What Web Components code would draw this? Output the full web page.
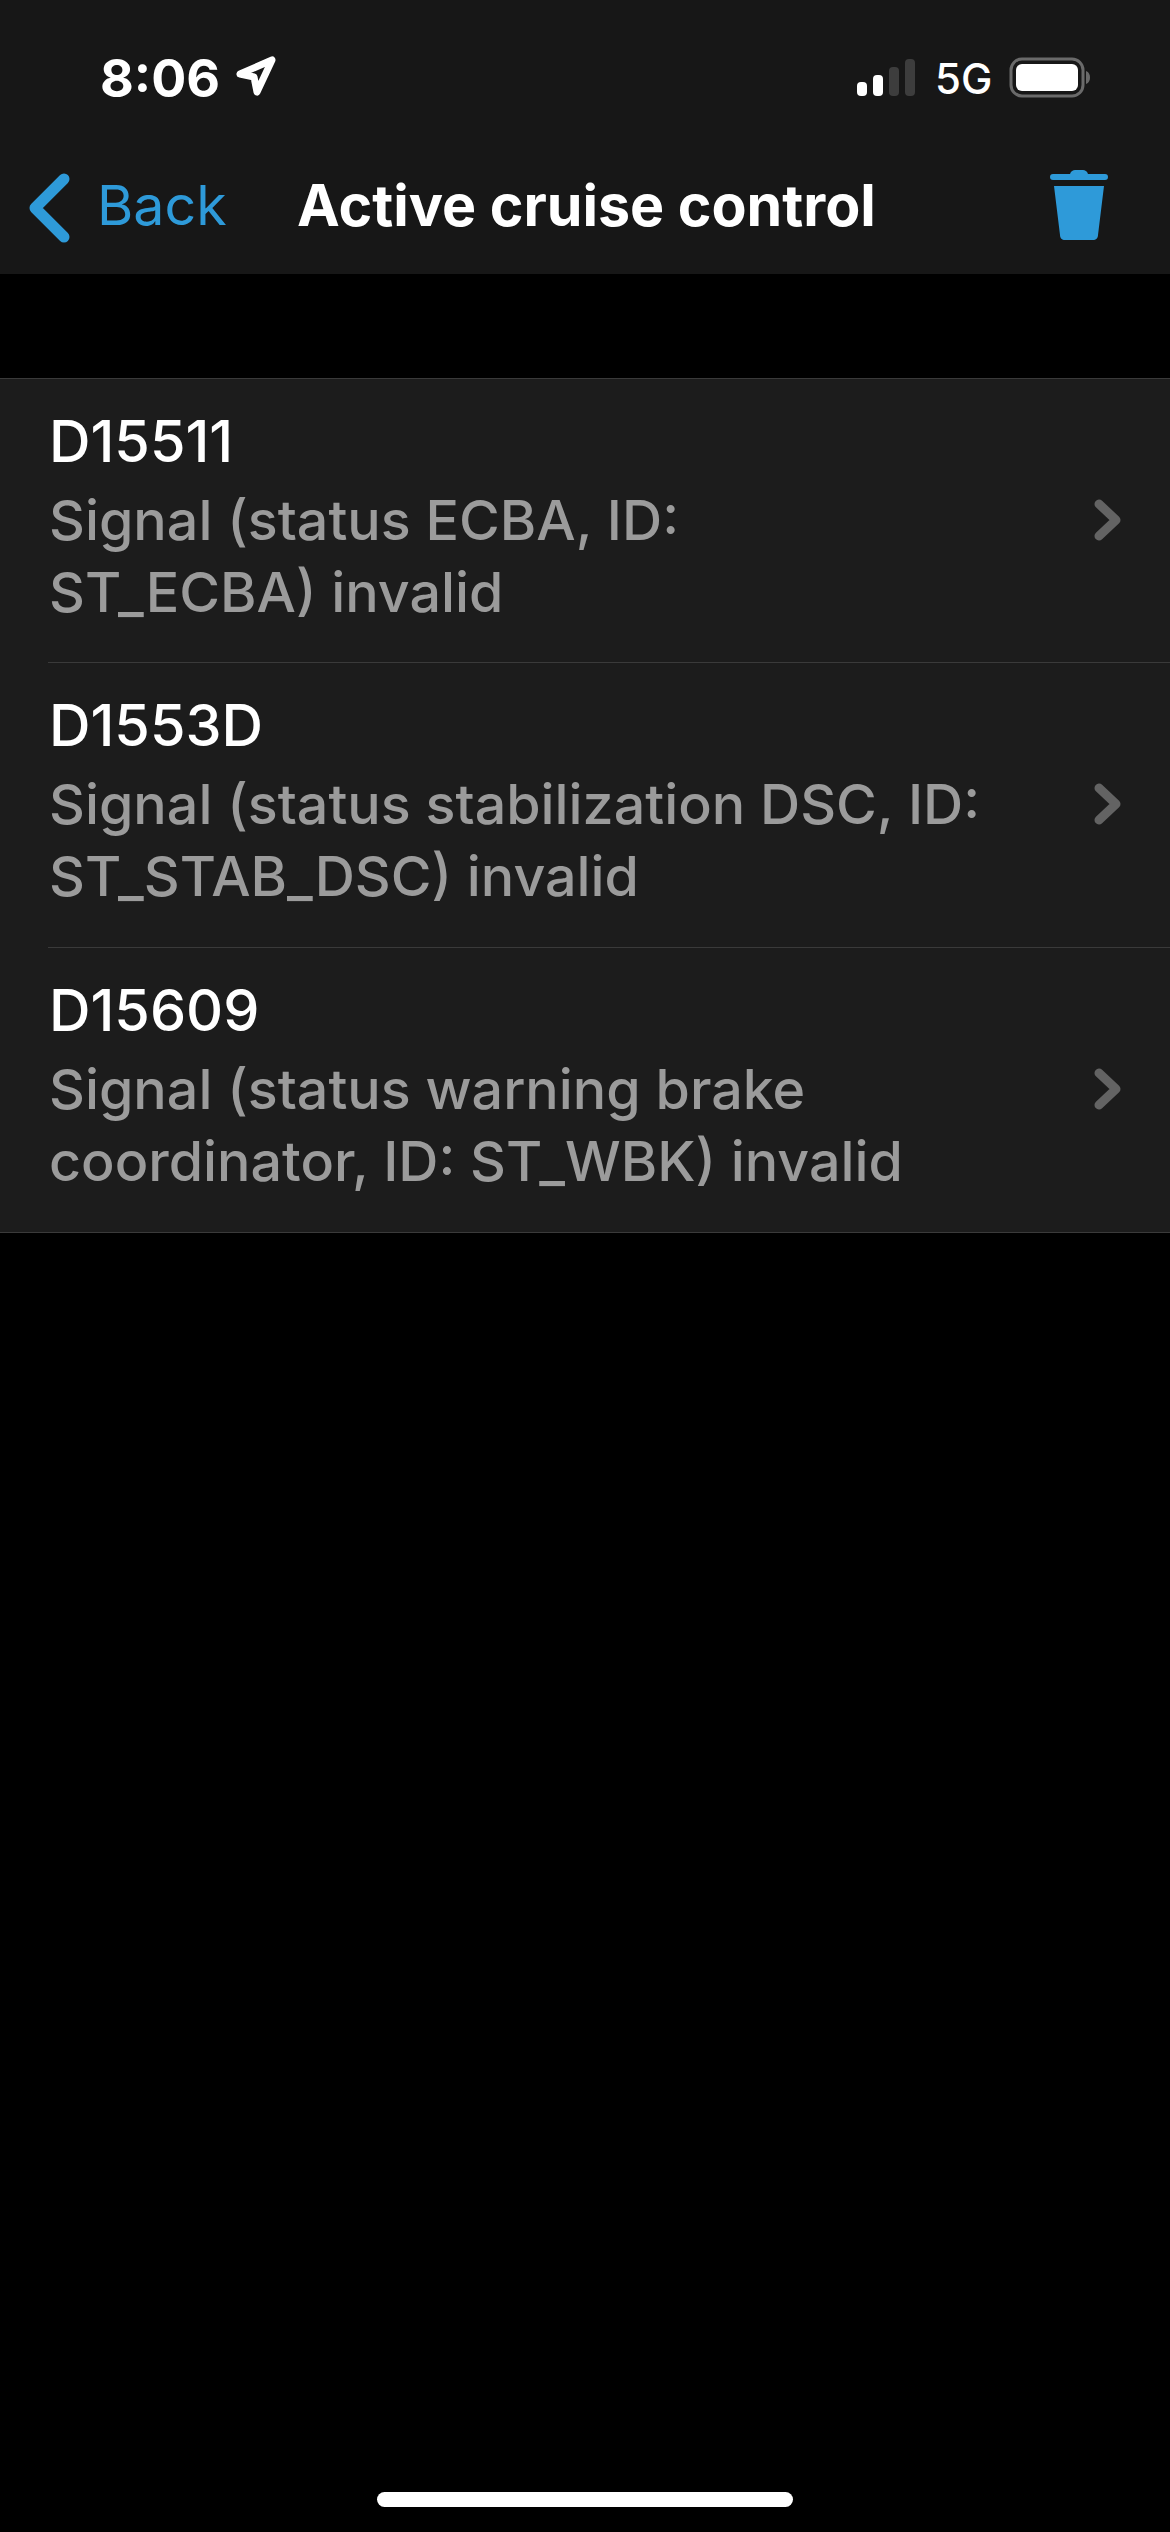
<!DOCTYPE html>
<html lang="en">
<head>
<meta charset="utf-8">
<title>Active cruise control</title>
<style>
  html, body { margin: 0; background: #000; }
  body {
    width: 1170px;
    height: 2532px;
    overflow: hidden;
    display: flex;
    flex-direction: column;
    font-family: Inter, Roboto, "Liberation Sans", sans-serif;
    color: #fff;
  }
  fault-list { margin-top: 104px; }
  home-indicator { margin-top: auto; }
</style>
</head>
<body>
<app-header title-text="Active cruise control"></app-header>
<fault-list>
  <fault-row code="D15511">Signal (status ECBA, ID:<br>ST_ECBA) invalid</fault-row>
  <fault-row code="D1553D">Signal (status stabilization DSC, ID:<br>ST_STAB_DSC) invalid</fault-row>
  <fault-row code="D15609">Signal (status warning brake<br>coordinator, ID: ST_WBK) invalid</fault-row>
</fault-list>
<home-indicator></home-indicator>

<script>
const headerTemplate = Object.assign(document.createElement('template'), {
  innerHTML: `
    <style>
      :host { display: block; height: 274px; background: #171717; color: #fff; }
      .status {
        height: 152px;
        box-sizing: border-box;
        padding: 51px 79px 0 100px;
        display: flex;
        align-items: flex-start;
      }
      .time { font-size: 52px; line-height: 56px; font-weight: 700; }
      .arrow { margin: 4px 0 0 15px; }
      .right { margin-left: auto; display: flex; align-items: flex-start; }
      .bars { margin-top: 8px; }
      .net { font-size: 42px; line-height: 44px; font-weight: 500; margin: 6px 0 0 20px; width: 74px; }
      .battery { margin-top: 6px; }
      .nav {
        height: 122px;
        box-sizing: border-box;
        padding: 0 62px 0 28px;
        display: flex;
        align-items: flex-start;
      }
      .chevron { margin-top: 21px; }
      .back { font-size: 55.5px; line-height: 64px; color: #2e9ad9; margin: 21px 0 0 27px; width: 200px; }
      .title { font-size: 57.3px; line-height: 64px; font-weight: 700; margin-top: 21px; white-space: nowrap; flex: 1; }
      .trash { margin-top: 17px; }
    </style>
    <div class="status">
      <span class="time">8:06</span>
      <svg class="arrow" width="42" height="42" viewBox="0 0 42 42">
        <path d="M5 19 L37 5 L22 37 L19 22 Z" fill="none" stroke="#fff" stroke-width="7" stroke-linejoin="round"/>
      </svg>
      <span class="right">
        <svg class="bars" width="58" height="37" viewBox="0 0 58 37">
          <rect x="0" y="23" width="10" height="14" rx="4" fill="#fff"/>
          <rect x="16" y="16" width="10" height="21" rx="4" fill="#fff"/>
          <rect x="32" y="8" width="10" height="29" rx="4" fill="#3d3d3d"/>
          <rect x="48" y="0" width="10" height="37" rx="4" fill="#3d3d3d"/>
        </svg>
        <span class="net">5G</span>
        <svg class="battery" width="82" height="41" viewBox="0 0 82 41">
          <rect x="2" y="2" width="72" height="37" rx="11" fill="none" stroke="#6a6a6a" stroke-width="3"/>
          <rect x="7" y="7" width="62" height="27" rx="6" fill="#fff"/>
          <path d="M77 14 C80 15 81 18 81 20.5 C81 23 80 26 77 27 Z" fill="#6a6a6a"/>
        </svg>
      </span>
    </div>
    <div class="nav">
      <svg class="chevron" width="42" height="70" viewBox="0 0 42 70">
        <path d="M36 6 L7 35 L36 64" fill="none" stroke="#2e9ad9" stroke-width="11" stroke-linecap="round" stroke-linejoin="round"/>
      </svg>
      <span class="back">Back</span>
      <span class="title"></span>
      <svg class="trash" width="58" height="72" viewBox="0 0 58 72">
        <path d="M3 5 H20 C21 2 23 1 25 1 H33 C35 1 37 2 38 5 H55 C57 5 58 6 58 8 C58 10 57 11 55 11 H3 C1 11 0 10 0 8 C0 6 1 5 3 5 Z" fill="#2e9ad9"/>
        <path d="M4 17 H54 L48 66 C48 69 46 71 43 71 H15 C12 71 10 69 10 66 Z" fill="#2e9ad9"/>
      </svg>
    </div>
  `,
});

class AppHeader extends HTMLElement {
  constructor() {
    super();
    this.attachShadow({ mode: 'open' });
    this.shadowRoot.appendChild(headerTemplate.content.cloneNode(true));
    this.shadowRoot.querySelector('.title').textContent = this.getAttribute('title-text');
  }
}

const listTemplate = Object.assign(document.createElement('template'), {
  innerHTML: `
    <style>
      :host {
        display: block;
        background: #1c1c1c;
        border-top: 1px solid #3a3a3a;
        border-bottom: 1px solid #3a3a3a;
      }
    </style>
    <slot></slot>
  `,
});

class FaultList extends HTMLElement {
  constructor() {
    super();
    this.attachShadow({ mode: 'open' });
    this.shadowRoot.appendChild(listTemplate.content.cloneNode(true));
  }
}

const rowTemplate = Object.assign(document.createElement('template'), {
  innerHTML: `
    <style>
      :host { display: block; padding-left: 48px; }
      :host(:not(:last-child)) .row { border-bottom: 1px solid #3a3a3a; }
      :host(:nth-child(2)) .row { height: 285px; }
      .row {
        height: 284px;
        box-sizing: border-box;
        padding: 28px 48px 0 1px;
        display: flex;
        align-items: flex-start;
      }
      .text { flex: 1; }
      .code { font-size: 57.5px; line-height: 68px; color: #fff; font-weight: 500; }
      .desc { font-size: 55.6px; line-height: 72px; color: #9b9b9b; margin-top: 9px; font-weight: 500; }
      .chevron { margin-top: 92px; }
    </style>
    <div class="row">
      <div class="text">
        <div class="code"></div>
        <div class="desc"><slot></slot></div>
      </div>
      <svg class="chevron" width="28" height="42" viewBox="0 0 28 42">
        <path d="M5 5 L22 21 L5 37" fill="none" stroke="#636363" stroke-width="9" stroke-linecap="round" stroke-linejoin="round"/>
      </svg>
    </div>
  `,
});

class FaultRow extends HTMLElement {
  constructor() {
    super();
    this.attachShadow({ mode: 'open' });
    this.shadowRoot.appendChild(rowTemplate.content.cloneNode(true));
    this.shadowRoot.querySelector('.code').textContent = this.getAttribute('code');
  }
}

const homeTemplate = Object.assign(document.createElement('template'), {
  innerHTML: `
    <style>
      :host { display: flex; justify-content: center; padding-bottom: 25px; }
      .bar { width: 416px; height: 15px; border-radius: 8px; background: #fff; }
    </style>
    <div class="bar"></div>
  `,
});

class HomeIndicator extends HTMLElement {
  constructor() {
    super();
    this.attachShadow({ mode: 'open' });
    this.shadowRoot.appendChild(homeTemplate.content.cloneNode(true));
  }
}

customElements.define('app-header', AppHeader);
customElements.define('fault-list', FaultList);
customElements.define('fault-row', FaultRow);
customElements.define('home-indicator', HomeIndicator);
</script>
</body>
</html>
